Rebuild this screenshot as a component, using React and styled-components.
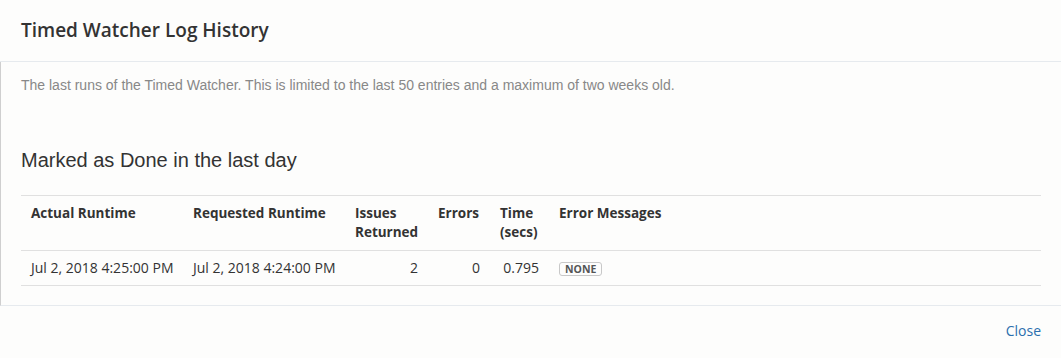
import React from "react";
import styled, { createGlobalStyle } from "styled-components";

const GlobalStyle = createGlobalStyle`
  html, body {
    margin: 0;
    padding: 0;
    background: #fdfdfc;
  }
  body {
    font-family: "Open Sans", "DejaVu Sans", sans-serif;
    color: #333;
  }
`;

const rows = [
  { actual: "Jul 2, 2018 4:25:00 PM", requested: "Jul 2, 2018 4:24:00 PM", issues: 2, errors: 0, time: "0.795", message: "None" },
];

const App = () => {
  return (
    <Dialog>
      <GlobalStyle />
      <Header>
        <Title>Timed Watcher Log History</Title>
      </Header>
      <Body>
        <Description>
          The last runs of the Timed Watcher. This is limited to the last 50 entries and a maximum of two weeks old.
        </Description>
        <SectionTitle>Marked as Done in the last day</SectionTitle>
        <Table>
          <colgroup>
            <col style={{ width: 162 }} />
            <col style={{ width: 162 }} />
            <col style={{ width: 83 }} />
            <col style={{ width: 62 }} />
            <col style={{ width: 59 }} />
            <col />
          </colgroup>
          <thead>
            <tr>
              <Th>Actual Runtime</Th>
              <Th>Requested Runtime</Th>
              <Th>Issues Returned</Th>
              <Th>Errors</Th>
              <Th>Time (secs)</Th>
              <Th>Error Messages</Th>
            </tr>
          </thead>
          <tbody>
            {rows.map((row) => (
              <tr key={row.actual}>
                <Td>{row.actual}</Td>
                <Td>{row.requested}</Td>
                <Td $numeric>{row.issues}</Td>
                <Td $numeric>{row.errors}</Td>
                <Td $numeric>{row.time}</Td>
                <Td>
                  <Lozenge>{row.message}</Lozenge>
                </Td>
              </tr>
            ))}
          </tbody>
        </Table>
      </Body>
      <Footer>
        <CloseLink href="#">Close</CloseLink>
      </Footer>
    </Dialog>
  );
};

export default App;

const Dialog = styled.div`
  width: 1061px;
  height: 358px;
  display: flex;
  flex-direction: column;
  background: #fdfdfc;
`;

const Header = styled.div`
  height: 62px;
  box-sizing: border-box;
  display: flex;
  align-items: center;
  padding: 0 21px 2px;
  border-bottom: 1px solid #e6eaee;
`;

const Title = styled.h2`
  margin: 0;
  font-size: 19px;
  font-weight: 600;
  color: #333;
`;

const Body = styled.div`
  height: 244px;
  box-sizing: border-box;
  border-left: 1px solid #cfcfcf;
  padding: 13px 20px 0 20px;
  border-bottom: 1px solid #e6eaee;
`;

const Description = styled.p`
  margin: 0;
  font-family: "Liberation Sans", Arial, sans-serif;
  font-size: 14px;
  line-height: 20px;
  color: #888;
`;

const SectionTitle = styled.h3`
  margin: 53px 0 0;
  font-family: "Liberation Sans", Arial, sans-serif;
  font-size: 20px;
  font-weight: 400;
  line-height: 24px;
  color: #333;
`;

const Table = styled.table`
  margin-top: 23px;
  width: 1020px;
  border-collapse: collapse;
  table-layout: fixed;
  border-top: 1px solid #e0e0e0;
  font-size: 14px;
  color: #333;
`;

const Th = styled.th`
  text-align: left;
  vertical-align: top;
  font-size: 13.5px;
  font-weight: 700;
  padding: 8px 10px 8px;
  line-height: 19px;
  border-bottom: 1px solid #e0e0e0;
`;

const Td = styled.td`
  text-align: ${(p) => (p.$numeric ? "right" : "left")};
  padding: 7px 10px 7px;
  line-height: 20px;
  border-bottom: 1px solid #e0e0e0;
  white-space: nowrap;
`;

const Lozenge = styled.span`
  display: inline-block;
  box-sizing: border-box;
  height: 14px;
  padding: 0 5px;
  border: 1px solid #c8c8c8;
  border-radius: 3px;
  font-size: 10.5px;
  font-weight: 700;
  line-height: 12px;
  text-transform: uppercase;
  color: #555;
  vertical-align: middle;
`;

const Footer = styled.div`
  flex: 1;
  display: flex;
  align-items: center;
  justify-content: flex-end;
  padding: 0 20px 4px;
`;

const CloseLink = styled.a`
  font-size: 14px;
  color: #2b6fae;
  text-decoration: none;
`;
